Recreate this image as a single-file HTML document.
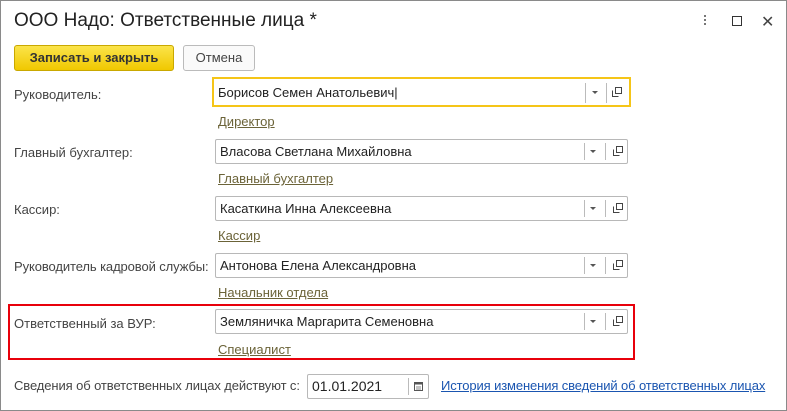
<!DOCTYPE html>
<html><head><meta charset="utf-8"><style>
body{margin:0;width:787px;height:411px;overflow:hidden;background:#fff;font-family:"Liberation Sans",Arial,sans-serif;font-size:13px;color:#333}
.win{position:absolute;left:0;top:0;width:785px;height:409px;border:1px solid #8a8a8a;background:#fff}
.abs{position:absolute}
.title{left:13px;top:9px;font-size:19px;color:#222}
.btn{top:44px;height:24px;border-radius:3px;line-height:24px;text-align:center;font-size:13px}
.lbl{left:13px;color:#444}
.inp{left:214px;width:411px;height:23px;border:1px solid #b8b8b8;border-radius:2px;background:#fff}
.inp span{position:absolute;left:4px;top:4px;color:#222}
.sep{position:absolute;top:3px;width:1px;height:17px;background:#bbb}
.arr{position:absolute;left:374px;top:10px;width:0;height:0;border-left:3px solid transparent;border-right:3px solid transparent;border-top:3px solid #555}
.cp{position:absolute;left:397px;top:6px;width:10px;height:10px}
.lnk{left:217px;color:#6b6338;text-decoration:underline}
</style></head><body>
<div class="win">
<div class="abs title">ООО Надо: Ответственные лица *</div>
<div class="abs" style="left:703px;top:14px;width:2px;height:10px;border-left:2px dotted #777"></div>
<div class="abs" style="left:731px;top:15px;width:8px;height:8px;border:1px solid #333"></div>
<div class="abs" style="left:760px;top:11px;font-size:16px;color:#444">✕</div>
<div class="abs btn" style="left:13px;width:158px;background:linear-gradient(#fbe44a,#f0c800);border:1px solid #c9a800;font-weight:bold;color:#333">Записать и закрыть</div>
<div class="abs btn" style="left:182px;width:70px;border:1px solid #bbb;background:#fafafa;color:#444">Отмена</div>

<div class="abs lbl" style="top:86px">Руководитель:</div>
<div class="abs inp" style="left:211px;top:76px;width:415px;height:26px;border:2px solid #f5c518;border-radius:0"><span style="top:6px">Борисов Семен Анатольевич|</span><div class="sep" style="left:371px;top:4px;height:20px"></div><div class="arr" style="left:378px;top:12px"></div><div class="sep" style="left:392px;top:4px;height:20px"></div><svg class="cp" style="left:398px;top:8px" viewBox="0 0 10 10"><path d="M3.5 0.5h6v6h-6z M0.5 3.5v6h6" fill="none" stroke="#444"/></svg></div>
<div class="abs lnk" style="top:113px">Директор</div>

<div class="abs lbl" style="top:144px">Главный бухгалтер:</div>
<div class="abs inp" style="top:138px"><span>Власова Светлана Михайловна</span><div class="sep" style="left:368px"></div><div class="arr"></div><div class="sep" style="left:389px"></div><svg class="cp" viewBox="0 0 10 10"><path d="M3.5 0.5h6v6h-6z M0.5 3.5v6h6" fill="none" stroke="#444"/></svg></div>
<div class="abs lnk" style="top:170px">Главный бухгалтер</div>

<div class="abs lbl" style="top:201px">Кассир:</div>
<div class="abs inp" style="top:195px"><span>Касаткина Инна Алексеевна</span><div class="sep" style="left:368px"></div><div class="arr"></div><div class="sep" style="left:389px"></div><svg class="cp" viewBox="0 0 10 10"><path d="M3.5 0.5h6v6h-6z M0.5 3.5v6h6" fill="none" stroke="#444"/></svg></div>
<div class="abs lnk" style="top:227px">Кассир</div>

<div class="abs lbl" style="top:258px;letter-spacing:-0.1px">Руководитель кадровой службы:</div>
<div class="abs inp" style="top:252px"><span>Антонова Елена Александровна</span><div class="sep" style="left:368px"></div><div class="arr"></div><div class="sep" style="left:389px"></div><svg class="cp" viewBox="0 0 10 10"><path d="M3.5 0.5h6v6h-6z M0.5 3.5v6h6" fill="none" stroke="#444"/></svg></div>
<div class="abs lnk" style="top:284px">Начальник отдела</div>

<div class="abs" style="left:7px;top:303px;width:623px;height:52px;border:2px solid #e8000b"></div>
<div class="abs lbl" style="top:315px">Ответственный за ВУР:</div>
<div class="abs inp" style="top:308px"><span>Земляничка Маргарита Семеновна</span><div class="sep" style="left:368px"></div><div class="arr"></div><div class="sep" style="left:389px"></div><svg class="cp" viewBox="0 0 10 10"><path d="M3.5 0.5h6v6h-6z M0.5 3.5v6h6" fill="none" stroke="#444"/></svg></div>
<div class="abs lnk" style="top:341px">Специалист</div>

<div class="abs lbl" style="top:377px;letter-spacing:-0.1px">Сведения об ответственных лицах действуют с:</div>
<div class="abs inp" style="left:306px;top:373px;width:120px"><span style="font-size:14px;top:3px">01.01.2021</span><div class="sep" style="left:100px"></div><svg class="abs" style="left:106px;top:6px" width="9" height="10" viewBox="0 0 9 10"><rect x="0.5" y="1.5" width="8" height="8" fill="none" stroke="#555"/><rect x="0.5" y="1.5" width="8" height="2" fill="#555"/><path d="M2 6h5M2 8h5" stroke="#888"/></svg></div>
<div class="abs" style="left:440px;top:377px;color:#1a55b0;text-decoration:underline;letter-spacing:-0.12px">История изменения сведений об ответственных лицах</div>
</div>
</body></html>
